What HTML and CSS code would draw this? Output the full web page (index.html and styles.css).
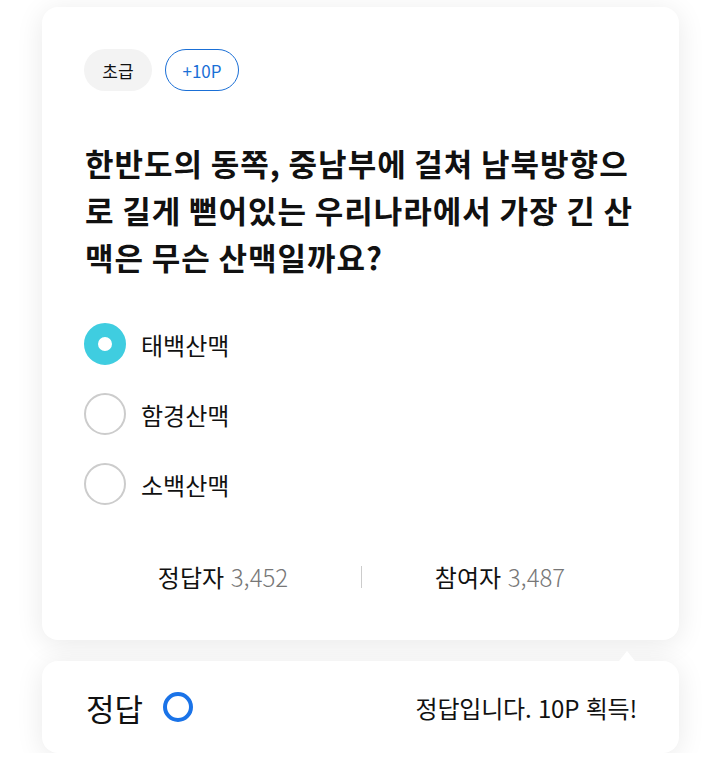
FILE: index.html
```html
<!DOCTYPE html>
<html lang="ko">
<head>
<meta charset="utf-8">
<link rel="stylesheet" href="styles.css">
</head>
<body>
<div class="page">
  <div class="card quiz">
    <div class="chips">
      <span class="chip level">초급</span>
      <span class="chip point">+10P</span>
    </div>
    <h1 class="question">한반도의 동쪽, 중남부에 걸쳐 남북방향으로 길게 뻗어있는 우리나라에서 가장 긴 산맥은 무슨 산맥일까요?</h1>
    <ul class="options">
      <li class="option selected"><span class="radio"></span><span class="label">태백산맥</span></li>
      <li class="option"><span class="radio"></span><span class="label">함경산맥</span></li>
      <li class="option"><span class="radio"></span><span class="label">소백산맥</span></li>
    </ul>
    <div class="stats">
      <div class="stat">정답자 <span class="num">3,452</span></div>
      <div class="divider"></div>
      <div class="stat">참여자 <span class="num">3,487</span></div>
    </div>
  </div>
  <div class="card result">
    <div class="result-left">
      <span class="result-title">정답</span>
      <span class="ring"></span>
    </div>
    <div class="result-msg">정답입니다. 10P 획득!</div>
  </div>
</div>
</body>
</html>
```
FILE: styles.css
```css
* { box-sizing: border-box; }
html, body { margin: 0; padding: 0; background: #fff; }
body {
  font-family: "Noto Sans CJK KR", "Noto Sans", sans-serif;
  color: #111;
}
.page {
  padding: 7px 41px 0 42px;
  display: flex;
  flex-direction: column;
  gap: 21px;
}
.card {
  background: #fff;
  border-radius: 16px;
  box-shadow: 0 4px 28px rgba(0,0,0,0.09);
  position: relative;
}
.quiz {
  padding: 42px 40px 40px 42px;
  height: 633px;
}
.chips { display: flex; gap: 13px; }
.chip {
  height: 42px;
  border-radius: 21px;
  display: inline-flex;
  align-items: center;
  justify-content: center;
  font-size: 17px;
}
.level { background: #f3f3f3; width: 68px; color: #111; }
.point { width: 74px; border: 1px solid #1a6fd6; color: #1a6fd6; }
.question {
  margin: 48px 0 0 1px;
  font-size: 31px;
  font-weight: 700;
  line-height: 47px;
  letter-spacing: 1px;
  word-spacing: -2px;
  word-break: break-all;
}
.options { list-style: none; margin: 43px 0 0 0; padding: 0; display: flex; flex-direction: column; gap: 28px; }
.option { display: flex; align-items: center; gap: 15px; height: 42px; }
.radio {
  width: 42px; height: 42px; border-radius: 50%;
  border: 2px solid #ccc; flex: none;
}
.selected .radio {
  border: 14px solid #3fcde0;
  background: #fff;
}
.label { font-size: 24px; }
.stats {
  margin-top: 54px;
  display: flex; align-items: center; justify-content: center;
}
.stat { font-size: 24px; width: 276px; text-align: center; }
.num { color: #777; font-weight: 300; }
.divider { width: 1px; height: 22px; background: #ccc; }
.result {
  height: 92px;
  display: flex; align-items: center; justify-content: space-between;
  padding: 0 42px 0 44px;
}
.result::before {
  content: "";
  position: absolute;
  right: 44px; top: -10px;
  border-left: 8px solid transparent;
  border-right: 8px solid transparent;
  border-bottom: 10px solid #fff;
}
.result-left { display: flex; align-items: center; gap: 20px; }
.result-title { font-size: 31px; }
.ring { width: 30px; height: 30px; border: 4px solid #1a73e8; border-radius: 50%; }
.result-msg { font-size: 24px; letter-spacing: -0.2px; }
```
